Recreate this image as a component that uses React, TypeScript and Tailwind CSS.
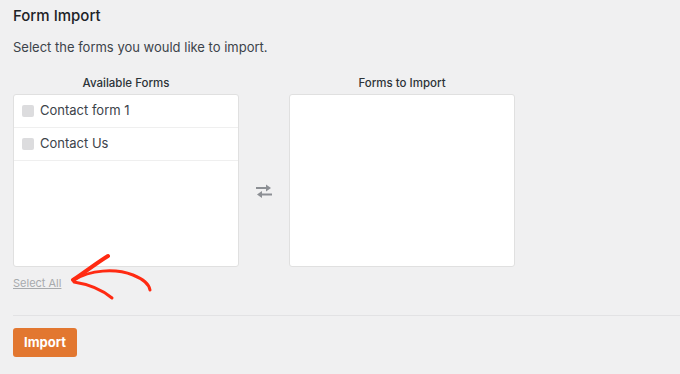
import React from 'react'

const forms = ['Contact form 1', 'Contact Us']

const SwapIcon = () => (
  <svg width="18" height="14" viewBox="0 0 18 14" fill="none" className="text-[#8c8f94]">
    <path d="M1 4h13" stroke="currentColor" strokeWidth="2" />
    <path d="M11 0.5L16 4l-5 3.5z" fill="currentColor" />
    <path d="M17 10.5H4" stroke="currentColor" strokeWidth="2" />
    <path d="M7 7L2 10.5 7 14z" fill="currentColor" />
  </svg>
)

const Arrow = () => (
  <svg
    className="absolute left-[60px] top-[245px] pointer-events-none"
    width="100"
    height="60"
    viewBox="60 245 100 60"
    fill="none"
  >
    <g stroke="#ff2a12" strokeLinecap="round" strokeLinejoin="round">
      <path d="M108 256 C98 262 85 272 73 280" strokeWidth="4" />
      <path d="M74 280 C90 270 115 268 133 275 C143 279 149 284 150 290" strokeWidth="3" />
      <path d="M74 282 C87 284 100 288 112 298" strokeWidth="3" />
    </g>
  </svg>
)

const App = () => {
  return (
    <div className="relative w-[680px] h-[374px] overflow-hidden bg-[#f0f0f1] font-['Inter',sans-serif] text-[#1d2327]">
      <div className="px-[13px] pt-[6px]">
        <h2 className="text-[15px] leading-[20px] font-medium">Form Import</h2>
        <p className="mt-[12px] text-[13px] leading-[18px] text-[#3c434a]">
          Select the forms you would like to import.
        </p>

        <div className="mt-[19px] flex items-stretch">
          <div className="w-[226px]">
            <div className="text-center text-[11.5px] font-medium leading-[16px] text-[#2c3338]">Available Forms</div>
            <div className="mt-[3px] h-[173px] bg-white border border-[#e0e0e0] rounded-[3px]">
              {forms.map((f) => (
                <div key={f} className="flex h-[33px] items-center gap-[6px] border-b border-[#efefef] px-[8px]">
                  <span className="w-[12px] h-[12px] rounded-[2px] bg-[#dcdcde]" />
                  <span className="text-[13px] text-[#3c434a]">{f}</span>
                </div>
              ))}
            </div>
          </div>

          <div className="w-[50px] flex items-center justify-center pt-[40px]">
            <SwapIcon />
          </div>

          <div className="w-[226px]">
            <div className="text-center text-[11.5px] font-medium leading-[16px] text-[#2c3338]">Forms to Import</div>
            <div className="mt-[3px] h-[173px] bg-white border border-[#e0e0e0] rounded-[3px]" />
          </div>
        </div>

        <button className="mt-[9px] text-[11px] leading-[14px] text-[#a7aaad] underline">Select All</button>
      </div>

      <div className="ml-[13px] mt-[22px] border-t border-[#e2e2e4]" />

      <div className="px-[13px] pt-[12px]">
        <button className="h-[29px] w-[64px] rounded-[3px] bg-[#e27730] text-[13px] font-bold text-white">
          Import
        </button>
      </div>

      <Arrow />
    </div>
  )
}

export default App
